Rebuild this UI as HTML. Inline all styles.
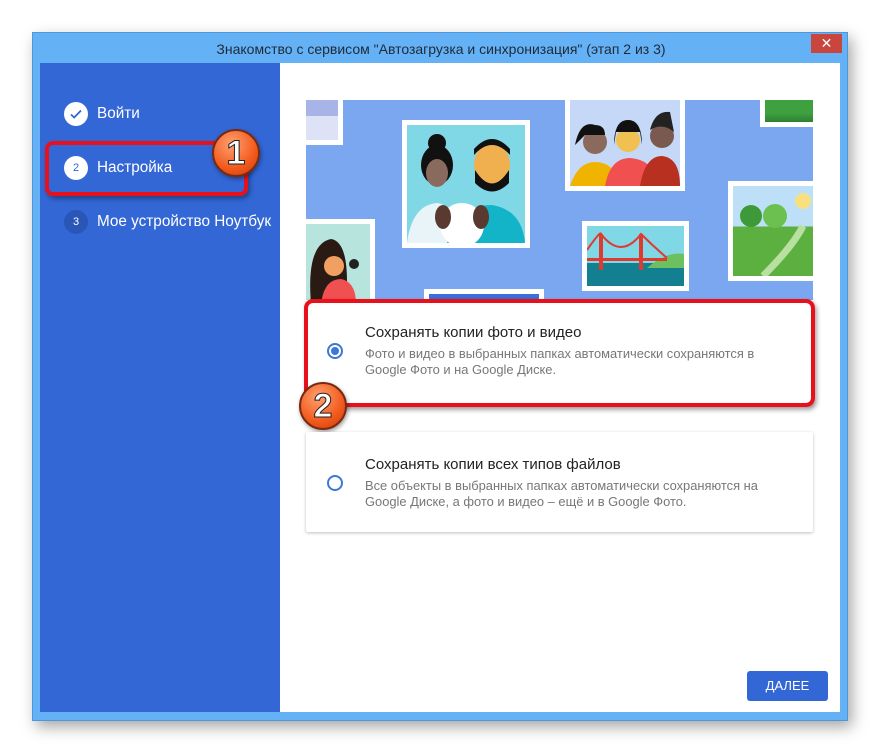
<!DOCTYPE html>
<html><head><meta charset="utf-8"><style>
*{margin:0;padding:0;box-sizing:border-box}
body{width:880px;height:753px;background:#fff;position:relative;overflow:hidden;font-family:"Liberation Sans","DejaVu Sans",sans-serif}
.abs{position:absolute}
.win{left:32px;top:32px;width:816px;height:689px;background:#64b2f5;border:1px solid #4d98dc;box-shadow:4px 6px 14px rgba(0,0,0,.35)}
.title{left:0;top:8px;width:816px;text-align:center;font-size:14px;color:#1e2a3a}
.close{left:778px;top:1px;width:31px;height:19px;background:#c8463e;color:#fff;text-align:center;font-size:14px;line-height:19px}
.left{left:40px;top:63px;width:240px;height:649px;background:#3367d6}
.right{left:280px;top:63px;width:560px;height:649px;background:#fff}
.step{position:absolute;left:64px;color:#fff;font-size:15.3px;display:flex;align-items:center}
.circ{width:24px;height:24px;border-radius:50%;display:flex;align-items:center;justify-content:center;font-size:11px;margin-right:9px}
.card{position:absolute;left:306px;width:507px;background:#fff;box-shadow:0 1px 3px rgba(0,0,0,.25);border-radius:2px}
.card h3{position:absolute;left:59px;font-weight:normal;font-size:15px;color:#222}
.card p{position:absolute;left:59px;font-size:12.9px;color:#777;line-height:15.5px;white-space:nowrap}
.radio{position:absolute;left:21px;width:16px;height:16px;border-radius:50%;border:2px solid #3b78d8}
.badge{position:absolute;width:48px;height:48px;border-radius:50%;background:radial-gradient(circle at 40% 30%,#ffa070,#f25a1c 60%,#c83a0a);border:2px solid #7a2a10;color:#fff;font-weight:bold;font-size:34px;text-align:center;line-height:44px;-webkit-text-stroke:1px #222;box-shadow:1px 2px 4px rgba(0,0,0,.4)}
.ph{position:absolute;border:5px solid #fff;overflow:hidden}
</style></head><body>
<div class="abs win">
 <div class="abs title">Знакомство с сервисом "Автозагрузка и синхронизация" (этап 2 из 3)</div>
 <div class="abs close">✕</div>
</div>
<div class="abs left"></div>
<div class="abs right"></div>
<div class="step" style="top:102px"><div class="circ" style="background:#fff"><svg width="14" height="14" viewBox="0 0 14 14"><path d="M2 7.5l3.2 3L12 3.5" fill="none" stroke="#3367d6" stroke-width="1.8"/></svg></div>Войти</div>
<div class="step" style="top:156px"><div class="circ" style="background:#fff;color:#3367d6">2</div>Настройка</div>
<div class="step" style="top:210px"><div class="circ" style="background:#2a56b8;color:#fff">3</div>Мое устройство Ноутбук</div>
<div class="abs" style="left:45px;top:141px;width:203px;height:55px;border:4px solid #e8101a;border-radius:8px;box-shadow:2px 3px 5px rgba(0,0,0,.35)"></div>
<div class="badge" style="left:212px;top:129px">1</div>

<div class="abs" style="left:306px;top:100px;width:507px;height:200px;background:#7ba6f0;overflow:hidden">
 <div class="ph" style="left:-5px;top:-5px;width:42px;height:50px;background:linear-gradient(#a8b4e8 40%,#dde2f6 40%)"></div>
 <div class="ph" style="left:96px;top:20px;width:128px;height:128px;background:#80d8e6">
  <svg width="118" height="118" viewBox="0 0 118 118"><circle cx="30" cy="18" r="9" fill="#111"/><ellipse cx="30" cy="40" rx="16" ry="20" fill="#111"/><ellipse cx="30" cy="48" rx="11" ry="14" fill="#8a6a5c"/><path d="M0 118 Q5 80 30 78 Q50 80 55 118Z" fill="#e8f4f8"/><path d="M40 118 Q50 80 85 80 Q115 85 118 118Z" fill="#14b4c8"/><ellipse cx="85" cy="40" rx="18" ry="22" fill="#f0b050"/><path d="M67 30 Q85 10 103 30 L103 24 Q85 4 67 24Z" fill="#111"/><path d="M68 45 Q85 72 102 45 L102 58 Q85 75 68 58Z" fill="#111"/><ellipse cx="55" cy="100" rx="22" ry="22" fill="#fff"/><ellipse cx="36" cy="92" rx="8" ry="12" fill="#5a3a30"/><ellipse cx="74" cy="92" rx="8" ry="12" fill="#5a3a30"/></svg>
 </div>
 <div class="ph" style="left:259px;top:-5px;width:120px;height:96px;background:#c6d8f8">
  <svg width="110" height="86" viewBox="0 0 110 86"><path d="M0 86 Q8 62 25 62 Q45 62 50 86Z" fill="#f0b400"/><path d="M35 86 Q40 58 60 58 Q85 60 88 86Z" fill="#f05050"/><path d="M70 86 Q75 56 92 56 Q110 58 110 86Z" fill="#b83020"/><circle cx="25" cy="42" r="12" fill="#8a6a5c"/><path d="M5 45 Q10 20 25 25 Q35 25 35 35 L15 35Z" fill="#111"/><circle cx="58" cy="40" r="12" fill="#f0c050"/><path d="M44 45 Q44 20 58 20 Q72 20 72 45 L70 32 L46 32Z" fill="#111"/><circle cx="92" cy="36" r="12" fill="#7a5a50"/><path d="M80 30 Q85 10 100 12 L104 32 Q92 22 80 30Z" fill="#222"/></svg>
 </div>
 <div class="ph" style="left:454px;top:-5px;width:58px;height:32px;background:linear-gradient(#3fa040 60%,#2c8030)"></div>
 <div class="ph" style="left:-5px;top:119px;width:74px;height:90px;background:#b7e4dc">
  <svg width="64" height="80" viewBox="0 0 64 80"><path d="M5 80 Q0 20 25 15 Q45 18 40 80Z" fill="#2a1a14"/><circle cx="28" cy="42" r="10" fill="#f0a060"/><path d="M15 80 Q18 55 35 55 Q50 58 50 80Z" fill="#f05050"/><circle cx="48" cy="40" r="5" fill="#222"/></svg>
 </div>
 <div class="ph" style="left:276px;top:121px;width:107px;height:70px;background:linear-gradient(#80d8e6 62%,#128090 62%)">
  <svg width="97" height="60" viewBox="0 0 97 60"><path d="M60 42 Q80 25 97 28 L97 42Z" fill="#6cc060"/><rect x="12" y="8" width="4" height="36" fill="#e03a30"/><rect x="52" y="8" width="4" height="36" fill="#e03a30"/><path d="M0 24 Q14 4 14 8 Q34 34 54 8 Q66 20 80 32" fill="none" stroke="#e03a30" stroke-width="2"/><rect x="0" y="32" width="80" height="3" fill="#e03a30"/></svg>
 </div>
 <div class="ph" style="left:422px;top:81px;width:90px;height:100px;background:linear-gradient(#bde0f8 45%,#5cb040 45%)">
  <svg width="80" height="90" viewBox="0 0 80 90"><circle cx="70" cy="15" r="8" fill="#f8e080"/><circle cx="42" cy="30" r="12" fill="#6cc050"/><circle cx="18" cy="30" r="11" fill="#3e9a38"/><path d="M30 90 Q60 60 70 40" fill="none" stroke="#b8e0a0" stroke-width="7"/></svg>
 </div>
 <div class="ph" style="left:118px;top:189px;width:120px;height:30px;background:#3a70d8"></div>
</div>

<div class="card" style="top:300px;height:105px">
 <div class="radio" style="top:43px;display:flex;align-items:center;justify-content:center"><div style="width:8px;height:8px;border-radius:50%;background:#3b78d8"></div></div>
 <h3 style="top:24px">Сохранять копии фото и видео</h3>
 <p style="top:46px">Фото и видео в выбранных папках автоматически сохраняются в<br>Google Фото и на Google Диске.</p>
</div>
<div class="abs" style="left:304px;top:299px;width:511px;height:108px;border:4px solid #e8101a;border-radius:9px;box-shadow:2px 3px 5px rgba(0,0,0,.35)"></div>
<div class="badge" style="left:299px;top:382px">2</div>

<div class="card" style="top:432px;height:100px">
 <div class="radio" style="top:43px"></div>
 <h3 style="top:24px">Сохранять копии всех типов файлов</h3>
 <p style="top:46px">Все объекты в выбранных папках автоматически сохраняются на<br>Google Диске, а фото и видео – ещё и в Google Фото.</p>
</div>

<div class="abs" style="left:747px;top:671px;width:81px;height:30px;background:#3367d6;border-radius:3px;color:#fff;font-size:13px;text-align:center;line-height:30px">ДАЛЕЕ</div>
</body></html>
